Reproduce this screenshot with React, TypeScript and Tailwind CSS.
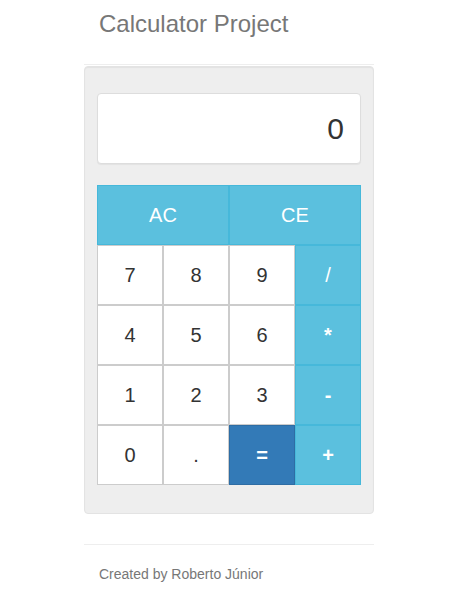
import React from 'react';

type Key = { label: string; kind: 'num' | 'op' | 'eq'; thin?: boolean };

const rows: Key[][] = [
  [
    { label: '7', kind: 'num' },
    { label: '8', kind: 'num' },
    { label: '9', kind: 'num' },
    { label: '/', kind: 'op', thin: true },
  ],
  [
    { label: '4', kind: 'num' },
    { label: '5', kind: 'num' },
    { label: '6', kind: 'num' },
    { label: '*', kind: 'op' },
  ],
  [
    { label: '1', kind: 'num' },
    { label: '2', kind: 'num' },
    { label: '3', kind: 'num' },
    { label: '-', kind: 'op' },
  ],
  [
    { label: '0', kind: 'num' },
    { label: '.', kind: 'num' },
    { label: '=', kind: 'eq' },
    { label: '+', kind: 'op' },
  ],
];

const kindClass: Record<Key['kind'], string> = {
  num: 'bg-white border-[#ccc] text-[#333]',
  op: 'bg-[#5bc0de] border-[#46b8da] text-white',
  eq: 'bg-[#337ab7] border-[#2e6da4] text-white',
};

export default function App() {
  return (
    <div className="min-h-[615px] bg-white font-['Liberation_Sans',Arial,sans-serif]">
      <div className="ml-[84px] w-[290px]">
        {/* Header */}
        <div className="border-b border-[#eee] px-[15px] pt-[10px] pb-[27px]">
          <h3 className="text-[24px] leading-[27px] text-[#777]">Calculator Project</h3>
        </div>

        {/* Calculator */}
        <div className="mt-[1px] rounded-[4px] border border-[#e3e3e3] bg-[#eee] pl-[12px] pr-[12px] pt-[26px] pb-[28px] shadow-[inset_0_1px_1px_rgba(0,0,0,0.05)]">
          <div className="flex h-[71px] w-[264px] items-center justify-end rounded-[4px] border border-[#ddd] bg-white pr-[16px] text-[30px] text-[#333] shadow-[0_1px_1px_rgba(0,0,0,0.05)]">
            0
          </div>

          <div className="mt-[21px] w-[264px]">
            <div className="flex">
              <button className="h-[60px] w-[132px] border border-[#46b8da] bg-[#5bc0de] text-[20px] text-white">
                AC
              </button>
              <button className="h-[60px] w-[132px] border border-[#46b8da] bg-[#5bc0de] text-[20px] text-white">
                CE
              </button>
            </div>
            {rows.map((row, i) => (
              <div key={i} className="flex">
                {row.map((k) => (
                  <button
                    key={k.label}
                    className={`h-[60px] w-[66px] border text-[20px] ${kindClass[k.kind]} ${
                      k.kind !== 'num' && !k.thin ? 'font-bold' : 'font-normal'
                    }`}
                  >
                    {k.label}
                  </button>
                ))}
              </div>
            ))}
          </div>
        </div>

        {/* Footer */}
        <div className="mt-[30px] border-t border-[#eee] px-[15px] pt-[19px]">
          <p className="text-[14px] leading-[20px] text-[#777]">Created by Roberto Júnior</p>
        </div>
      </div>
    </div>
  );
}
